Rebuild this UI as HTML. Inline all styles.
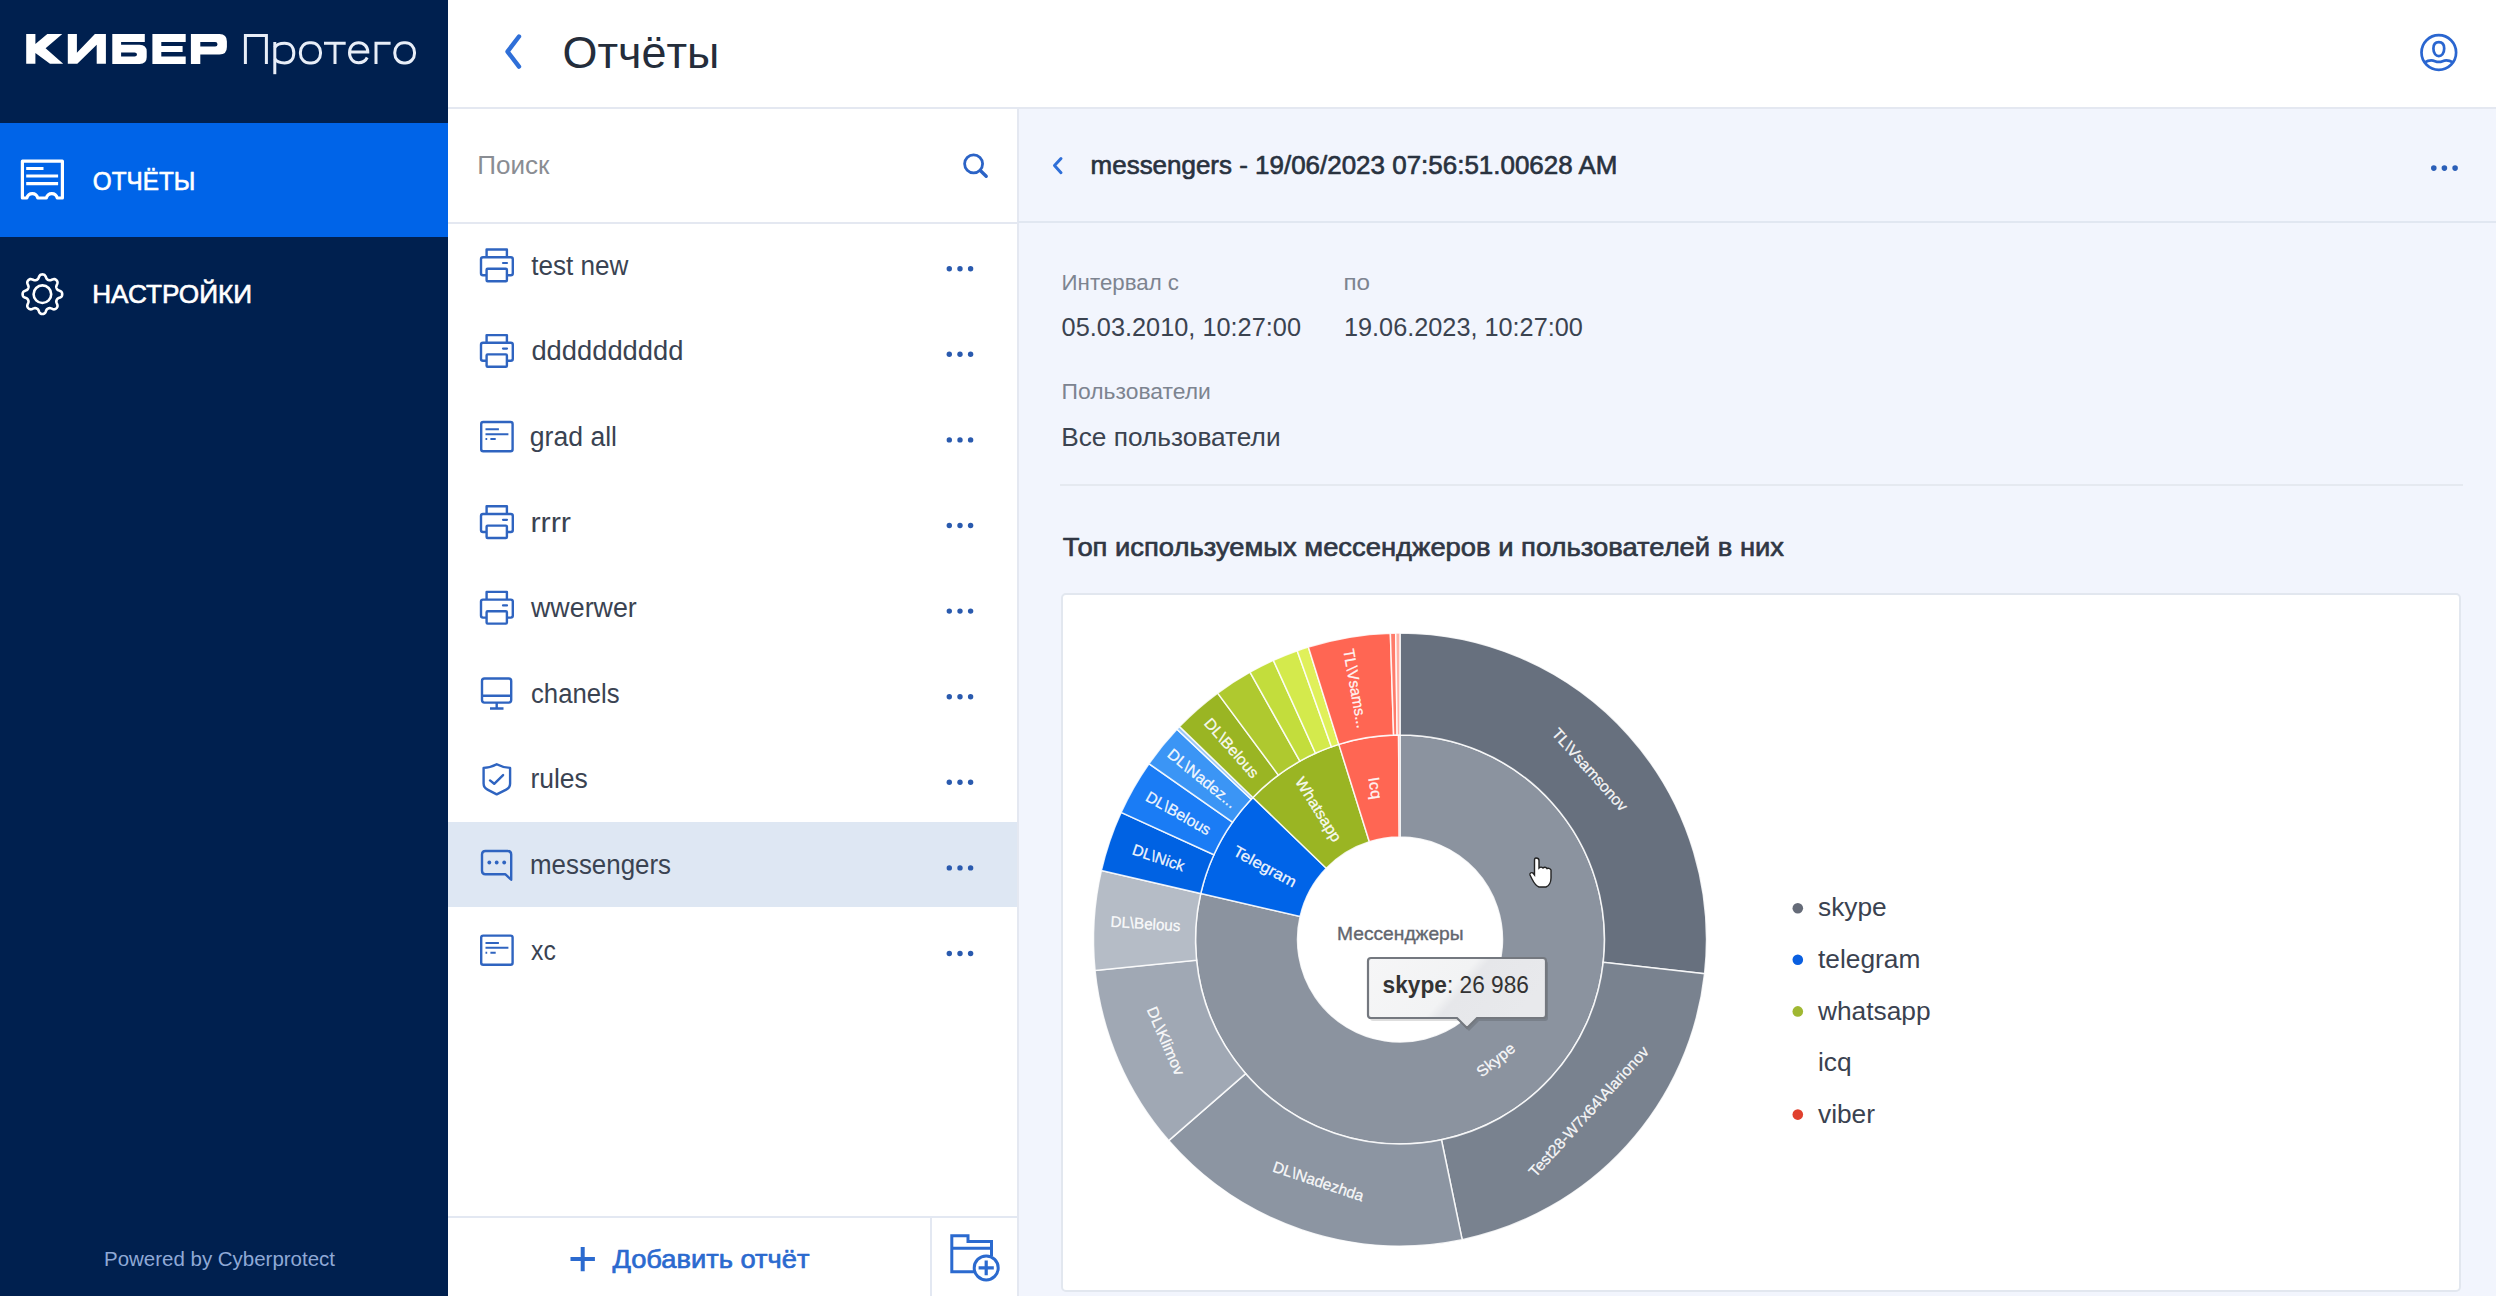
<!DOCTYPE html>
<html lang="ru"><head><meta charset="utf-8"><title>Отчёты</title>
<style>
*{box-sizing:border-box;margin:0;padding:0}
html,body{width:2496px;height:1296px;overflow:hidden;background:#fff;font-family:"Liberation Sans",sans-serif}
.a{position:absolute}
svg text{font-family:"Liberation Sans",sans-serif}
</style></head><body>
<div class="a" style="left:0;top:0;width:448px;height:1296px;background:#00204f"></div>
<div class="a" style="left:0;top:123px;width:448px;height:114px;background:#0064e8"></div>
<div class="a" style="left:448px;top:0;width:2048px;height:107px;background:#fff"></div>
<div class="a" style="left:448px;top:107px;width:2048px;height:2px;background:#e4e8f1"></div>
<div class="a" style="left:448px;top:109px;width:569px;height:1187px;background:#fff"></div>
<div class="a" style="left:448px;top:222px;width:569px;height:2px;background:#e4e8f1"></div>
<div class="a" style="left:448px;top:822px;width:569px;height:85px;background:#dee7f3"></div>
<div class="a" style="left:448px;top:1216px;width:569px;height:2px;background:#e3e8f2"></div>
<div class="a" style="left:930px;top:1217px;width:2px;height:79px;background:#e3e8f2"></div>
<div class="a" style="left:1017px;top:109px;width:2px;height:1187px;background:#e4e8f1"></div>
<div class="a" style="left:1019px;top:109px;width:1477px;height:1187px;background:#f2f5fd"></div>
<div class="a" style="left:1018px;top:221px;width:1478px;height:2px;background:#e1e7f1"></div>
<div class="a" style="left:1060px;top:484px;width:1403px;height:2px;background:#e5e9f0"></div>
<div class="a" style="left:1061px;top:593px;width:1400px;height:699px;background:#fff;border:2px solid #e2e7ef;border-radius:5px"></div>

<svg class="a" style="left:0;top:0" width="2496" height="1296" viewBox="0 0 2496 1296">
<!-- logo -->
<g fill="#fff" fill-rule="evenodd">
<path d="M26.2,34H35.4V44.1L47.3,34H62.3L45.6,48.3L63.2,63.8H50L35.4,53.1V63.8H26.2Z"/>
<path d="M67.8,34H76.9V52.7L94.9,34H105.9V63.8H96.7V44.8L77.3,63.8H67.8Z"/>
<path d="M112.3,34H144.8V42H121.1V44.7H139.5Q146.7,44.7 146.7,51.5V57.2Q146.7,63.9 139.5,63.9H112.3Z M121.1,52.5H134.6Q137,52.5 137,54.55Q137,56.6 134.6,56.6H121.1Z"/>
<path d="M152.4,34H185.7V42H161.3V46H182.6V52H161.3V56.4H185.7V63.9H152.4Z"/>
<path d="M190.9,34H219.5Q226.9,34 226.9,41.5V47.1Q226.9,54.6 219.5,54.6H200.3V63.9H190.9Z M200.3,42H215.2Q217.5,42 217.5,44.25Q217.5,46.5 215.2,46.5H200.3Z"/>
</g>
<g fill="none" stroke="#e8eef8" stroke-width="3">
<path d="M245.4,64.1V35.6H266.4V64.1"/>
<path d="M274.8,74.2V42"/>
<path d="M274.8,47.5C276.5,44.5 279.5,43.3 284.6,43.3C290.6,43.3 293.8,47.2 293.8,53.1C293.8,59 290.6,62.9 284.6,62.9C279.5,62.9 276.5,61.5 274.8,58.7"/>
<rect x="300.4" y="42.7" width="20.1" height="20.4" rx="9" ry="9.5"/>
<path d="M324,43.3H345.7M335,43.3V64.1"/>
<path d="M349.5,52.1H367.8C367.8,46.6 364,42.8 358.65,42.8C353.3,42.8 349.5,46.8 349.5,52.75C349.5,58.7 353.3,62.7 358.65,62.7C362.5,62.7 365.6,60.8 367.2,57.5"/>
<path d="M376,64.1V43.3H390.6"/>
<rect x="394.8" y="42.8" width="19.7" height="20.1" rx="9" ry="9.5"/>
</g>
<!-- nav icons -->
<g fill="none" stroke="#fff" stroke-width="3.2" stroke-linejoin="round">
<path d="M22.4,161.2H62.4V198H57.3C56.3,194.5 54.4,193.6 51.8,193.6C49.2,193.6 47.3,194.5 46.3,198H37.8C36.8,194.5 34.9,193.6 32.3,193.6C29.7,193.6 27.8,194.5 26.8,198H22.4Z"/>
<path d="M26.2,168.5H43.5M26.2,176H58.1M26.2,183.6H58.1"/>
</g>
<g fill="none" stroke="#fff" stroke-width="2.6">
<path d="M42.40,274.40L42.92,274.43L43.43,274.51L43.94,274.66L44.43,274.92L44.89,275.30L45.31,275.85L45.67,276.56L45.99,277.32L46.28,278.03L46.58,278.61L46.89,279.04L47.22,279.36L47.57,279.61L47.93,279.80L48.29,279.97L48.67,280.11L49.06,280.23L49.48,280.30L49.94,280.31L50.47,280.22L51.09,280.02L51.80,279.73L52.56,279.41L53.32,279.17L54.00,279.08L54.60,279.13L55.13,279.30L55.59,279.55L56.02,279.85L56.40,280.20L56.75,280.58L57.05,281.01L57.30,281.47L57.47,282.00L57.52,282.60L57.43,283.28L57.19,284.04L56.87,284.80L56.58,285.51L56.38,286.13L56.29,286.66L56.30,287.12L56.37,287.54L56.49,287.93L56.63,288.31L56.80,288.67L56.99,289.03L57.24,289.38L57.56,289.71L57.99,290.02L58.57,290.32L59.28,290.61L60.04,290.93L60.75,291.29L61.30,291.71L61.68,292.17L61.94,292.66L62.09,293.17L62.17,293.68L62.20,294.20L62.17,294.72L62.09,295.23L61.94,295.74L61.68,296.23L61.30,296.69L60.75,297.11L60.04,297.47L59.28,297.79L58.57,298.08L57.99,298.38L57.56,298.69L57.24,299.02L56.99,299.37L56.80,299.73L56.63,300.09L56.49,300.47L56.37,300.86L56.30,301.28L56.29,301.74L56.38,302.27L56.58,302.89L56.87,303.60L57.19,304.36L57.43,305.12L57.52,305.80L57.47,306.40L57.30,306.93L57.05,307.39L56.75,307.82L56.40,308.20L56.02,308.55L55.59,308.85L55.13,309.10L54.60,309.27L54.00,309.32L53.32,309.23L52.56,308.99L51.80,308.67L51.09,308.38L50.47,308.18L49.94,308.09L49.48,308.10L49.06,308.17L48.67,308.29L48.29,308.43L47.93,308.60L47.57,308.79L47.22,309.04L46.89,309.36L46.58,309.79L46.28,310.37L45.99,311.08L45.67,311.84L45.31,312.55L44.89,313.10L44.43,313.48L43.94,313.74L43.43,313.89L42.92,313.97L42.40,314.00L41.88,313.97L41.37,313.89L40.86,313.74L40.37,313.48L39.91,313.10L39.49,312.55L39.13,311.84L38.81,311.08L38.52,310.37L38.22,309.79L37.91,309.36L37.58,309.04L37.23,308.79L36.87,308.60L36.51,308.43L36.13,308.29L35.74,308.17L35.32,308.10L34.86,308.09L34.33,308.18L33.71,308.38L33.00,308.67L32.24,308.99L31.48,309.23L30.80,309.32L30.20,309.27L29.67,309.10L29.21,308.85L28.78,308.55L28.40,308.20L28.05,307.82L27.75,307.39L27.50,306.93L27.33,306.40L27.28,305.80L27.37,305.12L27.61,304.36L27.93,303.60L28.22,302.89L28.42,302.27L28.51,301.74L28.50,301.28L28.43,300.86L28.31,300.47L28.17,300.09L28.00,299.73L27.81,299.37L27.56,299.02L27.24,298.69L26.81,298.38L26.23,298.08L25.52,297.79L24.76,297.47L24.05,297.11L23.50,296.69L23.12,296.23L22.86,295.74L22.71,295.23L22.63,294.72L22.60,294.20L22.63,293.68L22.71,293.17L22.86,292.66L23.12,292.17L23.50,291.71L24.05,291.29L24.76,290.93L25.52,290.61L26.23,290.32L26.81,290.02L27.24,289.71L27.56,289.38L27.81,289.03L28.00,288.67L28.17,288.31L28.31,287.93L28.43,287.54L28.50,287.12L28.51,286.66L28.42,286.13L28.22,285.51L27.93,284.80L27.61,284.04L27.37,283.28L27.28,282.60L27.33,282.00L27.50,281.47L27.75,281.01L28.05,280.58L28.40,280.20L28.78,279.85L29.21,279.55L29.67,279.30L30.20,279.13L30.80,279.08L31.48,279.17L32.24,279.41L33.00,279.73L33.71,280.02L34.33,280.22L34.86,280.31L35.32,280.30L35.74,280.23L36.13,280.11L36.51,279.97L36.87,279.80L37.23,279.61L37.58,279.36L37.91,279.04L38.22,278.61L38.52,278.03L38.81,277.32L39.13,276.56L39.49,275.85L39.91,275.30L40.37,274.92L40.86,274.66L41.37,274.51L41.88,274.43Z"/>
<circle cx="42.4" cy="294.2" r="8.8"/>
</g>
<!-- header icons -->
<path d="M519,36.5L507.5,51.6L519,66.6" fill="none" stroke="#2f6fd8" stroke-width="4.4" stroke-linecap="round" stroke-linejoin="round"/>
<g fill="none" stroke="#2a66d0" stroke-width="2.7">
<circle cx="2438.8" cy="52.5" r="17.3"/>
<path d="M2438.8,42.2C2442.5,42.2 2444.2,44.5 2444.2,48.5C2444.2,53.5 2441.5,56.2 2438.8,56.2C2436.1,56.2 2433.4,53.5 2433.4,48.5C2433.4,44.5 2435.1,42.2 2438.8,42.2Z"/>
<path d="M2424.5,62.5C2428,60.5 2432,60 2435,61.2C2437.5,62.2 2440.1,62.2 2442.6,61.2C2445.6,60 2449.6,60.5 2453.1,62.5"/>
</g>
<!-- search icon -->
<g fill="none" stroke="#2b63c6">
<circle cx="973.6" cy="163.8" r="9" stroke-width="2.8"/>
<path d="M980.8,171L986.2,176.3" stroke-width="3.4" stroke-linecap="round"/>
</g>
<!-- list icons -->
<g transform="translate(0,0.0)" fill="none" stroke="#2f64c0" stroke-width="2.4" stroke-linejoin="round"><path d="M486.6,257.2V249.5H506.9V257.2"/><path d="M486.6,275.2H483Q481,275.2 481,273.2V259.2Q481,257.2 483,257.2H510.8Q512.8,257.2 512.8,259.2V273.2Q512.8,275.2 510.8,275.2H506.9"/><rect x="486.6" y="268.8" width="20.3" height="12.4" rx="1"/><path d="M503,263H507" stroke-width="2.2" stroke-linecap="round"/></g><g transform="translate(0,85.6)" fill="none" stroke="#2f64c0" stroke-width="2.4" stroke-linejoin="round"><path d="M486.6,257.2V249.5H506.9V257.2"/><path d="M486.6,275.2H483Q481,275.2 481,273.2V259.2Q481,257.2 483,257.2H510.8Q512.8,257.2 512.8,259.2V273.2Q512.8,275.2 510.8,275.2H506.9"/><rect x="486.6" y="268.8" width="20.3" height="12.4" rx="1"/><path d="M503,263H507" stroke-width="2.2" stroke-linecap="round"/></g><g transform="translate(0,0.0)" fill="none" stroke="#2f64c0" stroke-width="2.4" stroke-linejoin="round"><rect x="481.2" y="422" width="31.4" height="29.2" rx="2"/><path d="M485.5,429.3H498.9M485.5,434.2H508.4M485.5,439.1H487.2M490.4,439.1H495.7" stroke-width="2"/></g><g transform="translate(0,256.8)" fill="none" stroke="#2f64c0" stroke-width="2.4" stroke-linejoin="round"><path d="M486.6,257.2V249.5H506.9V257.2"/><path d="M486.6,275.2H483Q481,275.2 481,273.2V259.2Q481,257.2 483,257.2H510.8Q512.8,257.2 512.8,259.2V273.2Q512.8,275.2 510.8,275.2H506.9"/><rect x="486.6" y="268.8" width="20.3" height="12.4" rx="1"/><path d="M503,263H507" stroke-width="2.2" stroke-linecap="round"/></g><g transform="translate(0,342.4)" fill="none" stroke="#2f64c0" stroke-width="2.4" stroke-linejoin="round"><path d="M486.6,257.2V249.5H506.9V257.2"/><path d="M486.6,275.2H483Q481,275.2 481,273.2V259.2Q481,257.2 483,257.2H510.8Q512.8,257.2 512.8,259.2V273.2Q512.8,275.2 510.8,275.2H506.9"/><rect x="486.6" y="268.8" width="20.3" height="12.4" rx="1"/><path d="M503,263H507" stroke-width="2.2" stroke-linecap="round"/></g><g transform="translate(0,0.0)" fill="none" stroke="#2f64c0" stroke-width="2.4" stroke-linejoin="round"><rect x="482" y="678.5" width="29.2" height="24.1" rx="2.5"/><path d="M482,695.8H511.2M496.7,702.6V708.3M490,708.5H503.5"/></g><g transform="translate(0,0.0)" fill="none" stroke="#2f64c0" stroke-width="2.4" stroke-linejoin="round"><path d="M496.7,764.3Q490,767.9 483.6,767.9V783.5Q483.6,787.6 487.5,789.6L496.7,794.4L506.2,789.6Q510.1,787.6 510.1,783.5V767.9Q503.4,767.9 496.7,764.3Z"/><path d="M490,780.4L494.2,783.8L503.1,775.1" stroke-linecap="round"/></g><g transform="translate(0,0.0)" fill="none" stroke="#2f64c0" stroke-width="2.4" stroke-linejoin="round"><path d="M485.5,851H507.7Q511.2,851 511.2,854.5V879.7L505.2,874.2H485.5Q482,874.2 482,870.7V854.5Q482,851 485.5,851Z"/></g><g transform="translate(0,0.0)" fill="#2f64c0"><circle cx="489.3" cy="862.5" r="1.9"/><circle cx="496.7" cy="862.5" r="1.9"/><circle cx="504.2" cy="862.5" r="1.9"/></g><g transform="translate(0,513.6)" fill="none" stroke="#2f64c0" stroke-width="2.4" stroke-linejoin="round"><rect x="481.2" y="422" width="31.4" height="29.2" rx="2"/><path d="M485.5,429.3H498.9M485.5,434.2H508.4M485.5,439.1H487.2M490.4,439.1H495.7" stroke-width="2"/></g>
<g fill="#2a5aae"><circle cx="949.3" cy="268.7" r="2.7"/><circle cx="960" cy="268.7" r="2.7"/><circle cx="970.6" cy="268.7" r="2.7"/><circle cx="949.3" cy="354.3" r="2.7"/><circle cx="960" cy="354.3" r="2.7"/><circle cx="970.6" cy="354.3" r="2.7"/><circle cx="949.3" cy="439.9" r="2.7"/><circle cx="960" cy="439.9" r="2.7"/><circle cx="970.6" cy="439.9" r="2.7"/><circle cx="949.3" cy="525.5" r="2.7"/><circle cx="960" cy="525.5" r="2.7"/><circle cx="970.6" cy="525.5" r="2.7"/><circle cx="949.3" cy="611.1" r="2.7"/><circle cx="960" cy="611.1" r="2.7"/><circle cx="970.6" cy="611.1" r="2.7"/><circle cx="949.3" cy="696.7" r="2.7"/><circle cx="960" cy="696.7" r="2.7"/><circle cx="970.6" cy="696.7" r="2.7"/><circle cx="949.3" cy="782.3" r="2.7"/><circle cx="960" cy="782.3" r="2.7"/><circle cx="970.6" cy="782.3" r="2.7"/><circle cx="949.3" cy="867.9" r="2.7"/><circle cx="960" cy="867.9" r="2.7"/><circle cx="970.6" cy="867.9" r="2.7"/><circle cx="949.3" cy="953.5" r="2.7"/><circle cx="960" cy="953.5" r="2.7"/><circle cx="970.6" cy="953.5" r="2.7"/></g>
<!-- footer -->
<path d="M582.7,1247V1271.2M570.5,1259H594.9" stroke="#2b6acf" stroke-width="4"/>
<g fill="none" stroke="#2b6acf" stroke-width="3">
<path d="M974,1271.8H951.8V1235.8H968V1241.5H991.5V1256"/>
<path d="M951.8,1248.3H991.5"/>
<circle cx="986.2" cy="1267.9" r="12"/>
<path d="M978.6,1267.9H993.8M986.2,1260.5V1275.3" stroke-width="3.2"/>
</g>
<!-- right header -->
<path d="M1061,158.5L1054.5,165.6L1061,172.7" fill="none" stroke="#2f6fd8" stroke-width="3" stroke-linecap="round" stroke-linejoin="round"/>
<g fill="#2b5fb8"><circle cx="2433.8" cy="168.1" r="2.8"/><circle cx="2444.4" cy="168.1" r="2.8"/><circle cx="2455.1" cy="168.1" r="2.8"/></g>
<text x="92.80" y="189.60" font-size="26.7" font-weight="normal" fill="#ffffff" stroke="#ffffff" stroke-width="0.65" stroke-linejoin="round" textLength="102.60" lengthAdjust="spacingAndGlyphs">ОТЧЁТЫ</text>
<text x="92.20" y="303.20" font-size="26.7" font-weight="normal" fill="#ffffff" stroke="#ffffff" stroke-width="0.65" stroke-linejoin="round" textLength="159.80" lengthAdjust="spacingAndGlyphs">НАСТРОЙКИ</text>
<text x="104.00" y="1266.30" font-size="20.8" font-weight="normal" fill="#8fa9d6" textLength="231.00" lengthAdjust="spacingAndGlyphs">Powered by Cyberprotect</text>
<text x="562.60" y="67.60" font-size="45" font-weight="normal" fill="#242d3b" textLength="156.80" lengthAdjust="spacingAndGlyphs">Отчёты</text>
<text x="477.20" y="173.70" font-size="26.6" font-weight="normal" fill="#8a8d93" textLength="72.20" lengthAdjust="spacingAndGlyphs">Поиск</text>
<text x="531.20" y="274.60" font-size="27" font-weight="normal" fill="#3a4352" textLength="97.20" lengthAdjust="spacingAndGlyphs">test new</text>
<text x="531.40" y="360.40" font-size="27" font-weight="normal" fill="#3a4352" textLength="152.00" lengthAdjust="spacingAndGlyphs">dddddddddd</text>
<text x="529.80" y="445.80" font-size="27" font-weight="normal" fill="#3a4352" textLength="87.20" lengthAdjust="spacingAndGlyphs">grad all</text>
<text x="530.40" y="531.60" font-size="27" font-weight="normal" fill="#3a4352" textLength="40.60" lengthAdjust="spacingAndGlyphs">rrrr</text>
<text x="531.00" y="617.10" font-size="27" font-weight="normal" fill="#3a4352" textLength="105.80" lengthAdjust="spacingAndGlyphs">wwerwer</text>
<text x="531.00" y="703.00" font-size="27" font-weight="normal" fill="#3a4352" textLength="88.60" lengthAdjust="spacingAndGlyphs">chanels</text>
<text x="530.40" y="788.20" font-size="27" font-weight="normal" fill="#3a4352" textLength="57.40" lengthAdjust="spacingAndGlyphs">rules</text>
<text x="530.00" y="873.60" font-size="27" font-weight="normal" fill="#3a4352" textLength="141.00" lengthAdjust="spacingAndGlyphs">messengers</text>
<text x="531.00" y="959.50" font-size="27" font-weight="normal" fill="#3a4352" textLength="24.80" lengthAdjust="spacingAndGlyphs">xc</text>
<text x="612.40" y="1268.00" font-size="25" font-weight="normal" fill="#2b6acf" stroke="#2b6acf" stroke-width="0.65" stroke-linejoin="round" textLength="197.00" lengthAdjust="spacingAndGlyphs">Добавить отчёт</text>
<text x="1090.60" y="173.70" font-size="26" font-weight="normal" fill="#29323f" stroke="#29323f" stroke-width="0.65" stroke-linejoin="round" textLength="526.80" lengthAdjust="spacingAndGlyphs">messengers - 19/06/2023 07:56:51.00628 AM</text>
<text x="1061.60" y="290.00" font-size="22.6" font-weight="normal" fill="#7d8490" textLength="117.40" lengthAdjust="spacingAndGlyphs">Интервал с</text>
<text x="1343.40" y="290.00" font-size="22.6" font-weight="normal" fill="#7d8490" textLength="26.60" lengthAdjust="spacingAndGlyphs">по</text>
<text x="1061.60" y="336.30" font-size="26" font-weight="normal" fill="#3b4350" textLength="239.40" lengthAdjust="spacingAndGlyphs">05.03.2010, 10:27:00</text>
<text x="1344.00" y="336.30" font-size="26" font-weight="normal" fill="#3b4350" textLength="238.80" lengthAdjust="spacingAndGlyphs">19.06.2023, 10:27:00</text>
<text x="1061.60" y="398.80" font-size="22.6" font-weight="normal" fill="#7d8490" textLength="149.20" lengthAdjust="spacingAndGlyphs">Пользователи</text>
<text x="1061.20" y="445.70" font-size="26.2" font-weight="normal" fill="#3b4350" textLength="219.40" lengthAdjust="spacingAndGlyphs">Все пользователи</text>
<text x="1062.80" y="555.80" font-size="26.5" font-weight="normal" fill="#303744" stroke="#303744" stroke-width="0.65" stroke-linejoin="round" textLength="721.20" lengthAdjust="spacingAndGlyphs">Топ используемых мессенджеров и пользователей в них</text>
<!-- chart -->
<g stroke="#fff" stroke-width="1.5" stroke-opacity="0.85">
<path d="M1400.00,735.00A204.5,204.5 0 1 1 1200.74,893.50L1300.13,916.44A102.5,102.5 0 1 0 1400.00,837.00Z" fill="#8b939f"/>
<path d="M1200.74,893.50A204.5,204.5 0 0 1 1252.90,797.44L1326.27,868.30A102.5,102.5 0 0 0 1300.13,916.44Z" fill="#0064e8"/>
<path d="M1252.90,797.44A204.5,204.5 0 0 1 1338.85,744.36L1369.35,841.69A102.5,102.5 0 0 0 1326.27,868.30Z" fill="#9ab523"/>
<path d="M1338.85,744.36A204.5,204.5 0 0 1 1398.57,735.00L1399.28,837.00A102.5,102.5 0 0 0 1369.35,841.69Z" fill="#ff6653"/>
<path d="M1398.57,735.00A204.5,204.5 0 0 1 1400.00,735.00L1400.00,837.00A102.5,102.5 0 0 0 1399.28,837.00Z" fill="#e84a3a"/>
<path d="M1400.00,633.00A306.5,306.5 0 0 1 1704.59,973.67L1603.23,962.30A204.5,204.5 0 0 0 1400.00,735.00Z" fill="#67707e"/>
<path d="M1704.59,973.67A306.5,306.5 0 0 1 1462.15,1239.63L1441.47,1139.75A204.5,204.5 0 0 0 1603.23,962.30Z" fill="#79828f"/>
<path d="M1462.15,1239.63A306.5,306.5 0 0 1 1168.68,1140.58L1245.66,1073.66A204.5,204.5 0 0 0 1441.47,1139.75Z" fill="#8c95a2"/>
<path d="M1168.68,1140.58A306.5,306.5 0 0 1 1095.07,970.47L1196.55,960.17A204.5,204.5 0 0 0 1245.66,1073.66Z" fill="#a0a8b4"/>
<path d="M1095.07,970.47A306.5,306.5 0 0 1 1101.36,870.55L1200.74,893.50A204.5,204.5 0 0 0 1196.55,960.17Z" fill="#b5bcc6"/>
<path d="M1101.36,870.55A306.5,306.5 0 0 1 1121.10,812.40L1213.91,854.70A204.5,204.5 0 0 0 1200.74,893.50Z" fill="#0062e3"/>
<path d="M1121.10,812.40A306.5,306.5 0 0 1 1148.93,763.70L1232.48,822.20A204.5,204.5 0 0 0 1213.91,854.70Z" fill="#1a7cf5"/>
<path d="M1148.93,763.70A306.5,306.5 0 0 1 1176.94,729.30L1251.17,799.25A204.5,204.5 0 0 0 1232.48,822.20Z" fill="#3b95f5"/>
<path d="M1176.94,729.30A306.5,306.5 0 0 1 1179.52,726.59L1252.90,797.44A204.5,204.5 0 0 0 1251.17,799.25Z" fill="#9cc8f5"/>
<path d="M1179.52,726.59A306.5,306.5 0 0 1 1217.69,693.12L1278.36,775.11A204.5,204.5 0 0 0 1252.90,797.44Z" fill="#9ab523"/>
<path d="M1217.69,693.12A306.5,306.5 0 0 1 1250.00,672.21L1299.92,761.16A204.5,204.5 0 0 0 1278.36,775.11Z" fill="#afc92f"/>
<path d="M1250.00,672.21A306.5,306.5 0 0 1 1273.38,660.38L1315.52,753.27A204.5,204.5 0 0 0 1299.92,761.16Z" fill="#c3dd3c"/>
<path d="M1273.38,660.38A306.5,306.5 0 0 1 1297.18,650.76L1331.40,746.85A204.5,204.5 0 0 0 1315.52,753.27Z" fill="#d4ea4c"/>
<path d="M1297.18,650.76A306.5,306.5 0 0 1 1308.34,647.03L1338.85,744.36A204.5,204.5 0 0 0 1331.40,746.85Z" fill="#e0f05a"/>
<path d="M1308.34,647.03A306.5,306.5 0 0 1 1390.37,633.15L1393.58,735.10A204.5,204.5 0 0 0 1338.85,744.36Z" fill="#ff6653"/>
<path d="M1390.37,633.15A306.5,306.5 0 0 1 1395.72,633.03L1397.14,735.02A204.5,204.5 0 0 0 1393.58,735.10Z" fill="#ff7b6a"/>
<path d="M1395.72,633.03A306.5,306.5 0 0 1 1400.00,633.00L1400.00,735.00A204.5,204.5 0 0 0 1397.14,735.02Z" fill="#ffb0a5"/>
</g>
<g fill="#fff" font-size="15.5" text-anchor="middle" fill-opacity="0.93" stroke="#fff" stroke-width="0.45" stroke-opacity="0.6">
<text x="1590.1" y="769.5" transform="rotate(48.2 1590.1 769.5)" dy="0.36em" textLength="105" lengthAdjust="spacingAndGlyphs">TL\Vsamsonov</text>
<text x="1588.5" y="1111.3" transform="rotate(-47.7 1588.5 1111.3)" dy="0.36em" textLength="170" lengthAdjust="spacingAndGlyphs">Test28-W7x64\Alarionov</text>
<text x="1318.5" y="1181.1" transform="rotate(18.7 1318.5 1181.1)" dy="0.36em" textLength="95" lengthAdjust="spacingAndGlyphs">DL\Nadezhda</text>
<text x="1166.0" y="1040.8" transform="rotate(66.6 1166.0 1040.8)" dy="0.36em" textLength="73" lengthAdjust="spacingAndGlyphs">DL\Klimov</text>
<text x="1145.5" y="923.5" transform="rotate(3.6 1145.5 923.5)" dy="0.36em" textLength="70" lengthAdjust="spacingAndGlyphs">DL\Belous</text>
<text x="1158.5" y="857.5" transform="rotate(18.8 1158.5 857.5)" dy="0.36em" textLength="54" lengthAdjust="spacingAndGlyphs">DL\Nick</text>
<text x="1178.6" y="813.0" transform="rotate(29.8 1178.6 813.0)" dy="0.36em" textLength="72" lengthAdjust="spacingAndGlyphs">DL\Belous</text>
<text x="1202.4" y="778.3" transform="rotate(39.2 1202.4 778.3)" dy="0.36em" textLength="84" lengthAdjust="spacingAndGlyphs">DL\Nadez...</text>
<text x="1231.9" y="747.8" transform="rotate(48.8 1231.9 747.8)" dy="0.36em" textLength="74" lengthAdjust="spacingAndGlyphs">DL\Belous</text>
<text x="1355.7" y="688.4" transform="rotate(80.0 1355.7 688.4)" dy="0.36em" textLength="80" lengthAdjust="spacingAndGlyphs">TL\Vsams...</text>
<text x="1265.1" y="866.3" transform="rotate(28.5 1265.1 866.3)" dy="0.36em" textLength="69.5" lengthAdjust="spacingAndGlyphs">Telegram</text>
<text x="1318.7" y="809.3" transform="rotate(58.0 1318.7 809.3)" dy="0.36em" textLength="73" lengthAdjust="spacingAndGlyphs">Whatsapp</text>
<text x="1375.5" y="788.0" transform="rotate(80.8 1375.5 788.0)" dy="0.36em" textLength="22" lengthAdjust="spacingAndGlyphs">Icq</text>
<text x="1495.6" y="1059.6" transform="rotate(-38.5 1495.6 1059.6)" dy="0.36em" textLength="44" lengthAdjust="spacingAndGlyphs">Skype</text>
</g>
<text x="1337" y="940" font-size="18.5" fill="#62666e" stroke="#62666e" stroke-width="0.35" textLength="126.6" lengthAdjust="spacingAndGlyphs">Мессенджеры</text>
<defs><linearGradient id="tg" x1="0" y1="0" x2="1" y2="0.35"><stop offset="0" stop-color="#f6f6f7"/><stop offset="0.55" stop-color="#f2f3f4"/><stop offset="0.62" stop-color="#e6e7ea"/><stop offset="1" stop-color="#e8e9ec"/></linearGradient></defs>
<path d="M1371,958H1543Q1546,958 1546,961V1015Q1546,1018 1543,1018H1477L1467,1028L1457,1018H1371Q1368,1018 1368,1015V961Q1368,958 1371,958Z" fill="#000" fill-opacity="0.13" transform="translate(2,3)"/>
<path d="M1371,958H1543Q1546,958 1546,961V1015Q1546,1018 1543,1018H1477L1467,1028L1457,1018H1371Q1368,1018 1368,1015V961Q1368,958 1371,958Z" fill="url(#tg)" stroke="#74787f" stroke-width="2.2"/>
<text x="1382.6" y="992.6" font-size="23" fill="#333" textLength="146.4" lengthAdjust="spacingAndGlyphs"><tspan font-weight="bold">skype</tspan>: 26 986</text>
<g transform="translate(1530,856)">
<path d="M6,2C7.5,2 9,3 9,4.5V12C10,11 12,11 13,12C14,11 16,11 17,12.5C18,12 20,12 21,14V22C21,26 19,30 16,31H9C6,30 4,27 2,23L0,19C-0.5,17.5 1,16 3,17L4.5,19V4.5C4.5,3 5,2 6,2Z" fill="#fff" stroke="#222" stroke-width="1.4"/>
</g>
<circle cx="1797.8" cy="908.2" r="5.3" fill="#656b78"/>
<text x="1818" y="916.4" font-size="26.3" fill="#3a4250">skype</text>
<circle cx="1797.8" cy="959.8" r="5.3" fill="#0a5fe0"/>
<text x="1818" y="968.0" font-size="26.3" fill="#3a4250">telegram</text>
<circle cx="1797.8" cy="1011.4" r="5.3" fill="#a0b832"/>
<text x="1818" y="1019.6" font-size="26.3" fill="#3a4250">whatsapp</text>
<text x="1818" y="1071.2" font-size="26.3" fill="#3a4250">icq</text>
<circle cx="1797.8" cy="1114.6" r="5.3" fill="#e0402e"/>
<text x="1818" y="1122.8" font-size="26.3" fill="#3a4250">viber</text>
</svg>
</body></html>
